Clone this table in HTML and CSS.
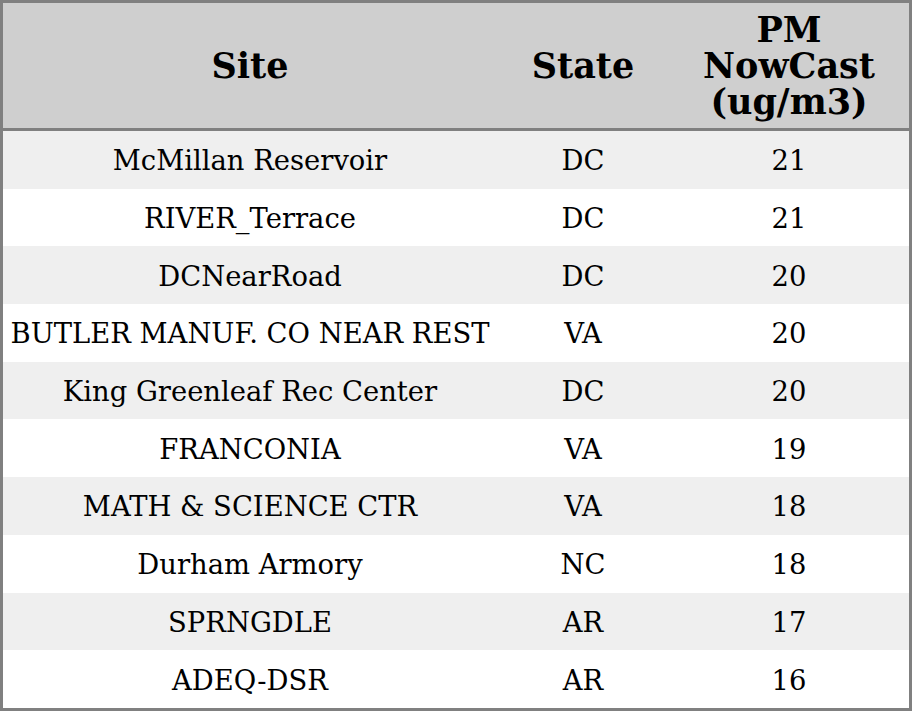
FILE: index.html
```html
<!DOCTYPE html>
<html>
<head>
<meta charset="utf-8">
<link rel="stylesheet" href="styles.css">
</head>
<body>
<table class="data">
  <thead>
    <tr><th class="c-site">Site</th><th class="c-state">State</th><th class="c-pm"><span class="hl">PM</span><span class="hl">NowCast</span><span class="hl">(ug/m3)</span></th></tr>
  </thead>
  <tbody>
    <tr><td>McMillan Reservoir</td><td>DC</td><td>21</td></tr>
    <tr><td>RIVER_Terrace</td><td>DC</td><td>21</td></tr>
    <tr><td>DCNearRoad</td><td>DC</td><td>20</td></tr>
    <tr><td>BUTLER MANUF. CO NEAR REST</td><td>VA</td><td>20</td></tr>
    <tr><td>King Greenleaf Rec Center</td><td>DC</td><td>20</td></tr>
    <tr><td>FRANCONIA</td><td>VA</td><td>19</td></tr>
    <tr><td>MATH &amp; SCIENCE CTR</td><td>VA</td><td>18</td></tr>
    <tr><td>Durham Armory</td><td>NC</td><td>18</td></tr>
    <tr><td>SPRNGDLE</td><td>AR</td><td>17</td></tr>
    <tr><td>ADEQ-DSR</td><td>AR</td><td>16</td></tr>
  </tbody>
</table>
</body>
</html>
```
FILE: styles.css
```css
html, body {
  margin: 0;
  padding: 0;
  background: #ffffff;
}
.data {
  width: 912px;
  height: 711px;
  border-collapse: collapse;
  border: 3px solid #808080;
  font-family: "DejaVu Serif", serif;
  color: #000;
  table-layout: fixed;
}
.data th {
  background: #cfcfcf;
  font-weight: bold;
  font-size: 35px;
  line-height: 36px;
  height: 125px;
  padding: 0;
  border-bottom: 3px solid #808080;
  text-align: center;
}
.hl {
  display: block;
  height: 36px;
  line-height: 36px;
}
.c-site { width: 494px; }
.c-state { width: 172px; }
.c-pm { width: 240px; }
.data td {
  font-size: 27.4px;
  text-align: center;
  padding: 2px 0 0 0;
  height: 55.7px;
}
.data tbody tr:nth-child(odd) td {
  background: #efefef;
}
.data tbody tr:nth-child(even) td {
  background: #ffffff;
}
```
